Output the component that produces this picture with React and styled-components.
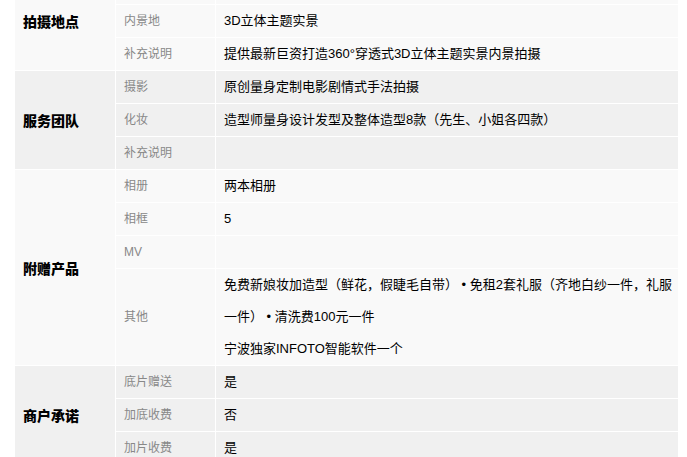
import React from "react";
import styled, { createGlobalStyle } from "styled-components";

const Global = createGlobalStyle`
  html, body {
    margin: 0;
    padding: 0;
    background: #ffffff;
    overflow: hidden;
  }
  body {
    font-family: "Liberation Sans", Arial, "Noto Sans CJK SC", sans-serif;
  }
`;

const Page = styled.div`
  height: 457px;
  overflow: hidden;
  padding-left: 14px;
`;

const Table = styled.table`
  margin-top: -29px;
  width: 665px;
  border-collapse: separate;
  border-spacing: 1px;
  background: #ffffff;
  table-layout: fixed;
`;

const Row = styled.tr`
  background: ${(p) => (p.$dark ? "#f0f0f0" : "#f9f9f9")};
`;

const GroupCell = styled.td`
  width: 100px;
  padding: 0 0 0 8px;
  box-sizing: border-box;
  vertical-align: middle;
  font-family: "Noto Sans CJK SC", "Liberation Sans", sans-serif;
  font-size: 14px;
  font-weight: 900;
  color: #000000;
  line-height: 32px;
`;

const LabelCell = styled.td`
  width: 99px;
  padding: 0 0 0 8px;
  box-sizing: border-box;
  vertical-align: middle;
  font-family: "Liberation Sans", "Noto Sans CJK SC", sans-serif;
  font-size: 12px;
  color: #888888;
  line-height: 32px;
  height: 32px;
`;

const ValueCell = styled.td`
  padding: 0 0 0 8px;
  box-sizing: border-box;
  vertical-align: middle;
  font-family: "Liberation Sans", "Noto Sans CJK SC", sans-serif;
  font-size: 13px;
  color: #000000;
  line-height: 32px;
  height: 32px;
  white-space: nowrap;
`;

const Line = styled.div`
  line-height: 32px;
`;

const groups = [
  {
    title: "拍摄地点",
    dark: false,
    rows: [
      { label: "", value: [] },
      { label: "内景地", value: ["3D立体主题实景"] },
      { label: "补充说明", value: ["提供最新巨资打造360°穿透式3D立体主题实景内景拍摄"] },
    ],
  },
  {
    title: "服务团队",
    dark: true,
    rows: [
      { label: "摄影", value: ["原创量身定制电影剧情式手法拍摄"] },
      { label: "化妆", value: ["造型师量身设计发型及整体造型8款（先生、小姐各四款）"] },
      { label: "补充说明", value: [] },
    ],
  },
  {
    title: "附赠产品",
    dark: false,
    rows: [
      { label: "相册", value: ["两本相册"] },
      { label: "相框", value: ["5"] },
      { label: "MV", value: [] },
      {
        label: "其他",
        value: [
          "免费新娘妆加造型（鲜花，假睫毛自带） • 免租2套礼服（齐地白纱一件，礼服",
          "一件） • 清洗费100元一件",
          "宁波独家INFOTO智能软件一个",
        ],
      },
    ],
  },
  {
    title: "商户承诺",
    dark: true,
    rows: [
      { label: "底片赠送", value: ["是"] },
      { label: "加底收费", value: ["否"] },
      { label: "加片收费", value: ["是"] },
    ],
  },
];

export default function App() {
  return (
    <>
      <Global />
      <Page>
        <Table>
          <colgroup>
            <col style={{ width: 100 }} />
            <col style={{ width: 99 }} />
            <col />
          </colgroup>
          <tbody>
            {groups.map((g) =>
              g.rows.map((r, i) => (
                <Row key={g.title + r.label + i} $dark={g.dark}>
                  {i === 0 && <GroupCell rowSpan={g.rows.length}>{g.title}</GroupCell>}
                  <LabelCell>{r.label}</LabelCell>
                  <ValueCell>
                    {r.value.map((t, k) => (
                      <Line key={k}>{t}</Line>
                    ))}
                  </ValueCell>
                </Row>
              ))
            )}
          </tbody>
        </Table>
      </Page>
    </>
  );
}
